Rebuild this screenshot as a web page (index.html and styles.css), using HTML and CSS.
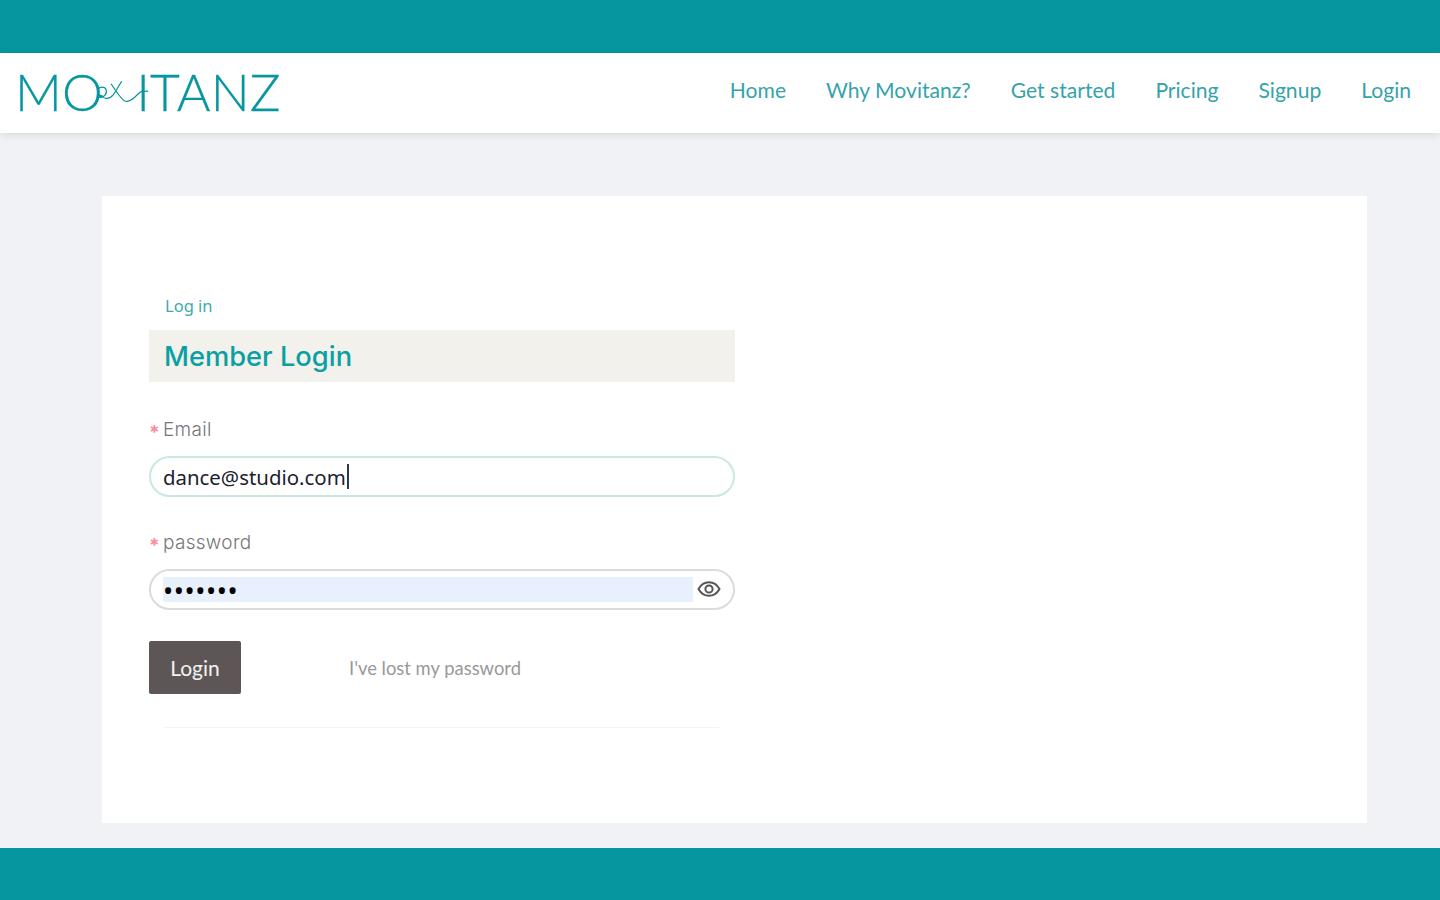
FILE: index.html
```html
<!DOCTYPE html>
<html lang="en">
<head>
<meta charset="utf-8">
<title>Movitanz - Member Login</title>
<link rel="stylesheet" href="styles.css">
</head>
<body>
<div class="topbar"></div>
<header class="header">
  <a class="logo" href="#">
    <span class="logo-text">MO<span class="logo-v">V</span><span class="logo-rest">ITANZ</span></span>
    <svg class="logo-flourish" viewBox="0 0 70 44" width="84" height="53" aria-hidden="true">
      <path d="M18 24c-3 0-5-2-4-5s6-3 7 0-2 7-6 6M14 23c5 3 9 5 13 0 3-4 5-9 7-11M25 14c3 4 7 11 11 14 4 2 8-2 12-6 2-2 3-2 8-2" fill="none" stroke="#06969f" stroke-width="1"/>
    </svg>
  </a>
  <nav class="nav">
    <a href="#">Home</a>
    <a href="#">Why Movitanz?</a>
    <a href="#">Get started</a>
    <a href="#">Pricing</a>
    <a href="#">Signup</a>
    <a href="#">Login</a>
  </nav>
</header>
<main class="main">
  <section class="card">
    <div class="form-col">
      <div class="crumb">Log in</div>
      <h1 class="title">Member Login</h1>
      <div class="field">
        <label class="label"><span class="req">*</span>Email</label>
        <div class="input focus"><span class="value">dance@studio.com</span><span class="caret"></span></div>
      </div>
      <div class="field">
        <label class="label"><span class="req">*</span>password</label>
        <div class="input pass">
          <span class="autofill">•••••••</span>
          <svg class="eye" viewBox="0 0 24 24" width="24" height="24" aria-hidden="true">
            <path d="M1.500 11C4 6.500 7.600 4.200 12 4.200s8 2.300 10.500 6.800c-2.500 4.500-6.100 6.800-10.500 6.800S4 15.500 1.500 11z" fill="none" stroke="#555" stroke-width="2"/>
            <circle cx="12" cy="11" r="3.600" fill="none" stroke="#555" stroke-width="2"/>
          </svg>
        </div>
      </div>
      <div class="actions">
        <button class="btn" type="button">Login</button>
        <a class="lost" href="#">I've lost my password</a>
      </div>
      <div class="rule"></div>
    </div>
  </section>
</main>
<div class="bottombar"></div>
</body>
</html>
```
FILE: styles.css
```css
* { box-sizing: border-box; }
html, body { margin: 0; height: 100%; }
body {
  width: 1440px;
  height: 900px;
  overflow: hidden;
  display: flex;
  flex-direction: column;
  background: #f0f2f5;
  font-family: "Lato", "Liberation Sans", sans-serif;
}
a { text-decoration: none; }

.topbar { height: 53px; background: #06969f; flex: none; }
.bottombar { height: 52px; background: #06969f; flex: none; }

.header {
  height: 80px;
  flex: none;
  background: #fff;
  display: flex;
  align-items: center;
  justify-content: space-between;
  padding: 0 29px 0 15px;
  box-shadow: 0 2px 8px rgba(0, 0, 0, 0.1);
  position: relative;
}
.logo { position: relative; display: block; color: #06969f; margin-top: -4px; }
.logo-text {
  display: block;
  font-family: "Lato", "Liberation Sans", sans-serif;
  font-weight: 300;
  font-size: 51.500px;
  line-height: 60px;
  letter-spacing: 0.3px;
  white-space: nowrap;
  -webkit-text-stroke: 0.3px #06969f;
}
.logo-v { opacity: 0; }
.logo-rest { margin-left: 0; }
.logo-flourish { position: absolute; left: 66px; top: 6px; }

.nav { display: flex; gap: 40px; margin-top: -7px; }
.nav a { color: #35a3a9; font-size: 21.100px; line-height: 26px; white-space: nowrap; }

.main { flex: 1; padding: 63px 73px 25px 102px; }
.card { height: 627px; background: #fff; padding: 99px 47px 0; }
.form-col { width: 586px; }

.crumb {
  padding-left: 16px;
  color: #3eaaad;
  font-family: "Noto Sans", sans-serif;
  font-size: 16.500px;
  line-height: 22px;
  margin-bottom: 13px;
}
.title {
  margin: 0;
  height: 52px;
  background: #f3f1ec;
  padding-left: 15px;
  color: #0aa0a3;
  font-family: "Inter", sans-serif;
  font-size: 27.300px;
  font-weight: 500;
  line-height: 54px;
}

.field { margin-top: 35px; }
.field + .field { margin-top: 33px; }
.label {
  display: flex;
  align-items: center;
  height: 24px;
  padding-top: 1px;
  color: #777;
  font-family: "Inter", sans-serif;
  font-weight: 300;
  font-size: 19px;
  letter-spacing: 0.3px;
  margin-bottom: 15px;
}
.req {
  width: 14px;
  color: #f58f9b;
  font-size: 19px;
  font-weight: 700;
  line-height: 15px;
  padding-top: 5px;
}

.input {
  height: 41px;
  border: 2px solid #d9dcdc;
  border-radius: 21px;
  background: #fff;
  display: flex;
  align-items: center;
  padding-left: 12px;
  color: #1c2230;
  font-family: "Noto Sans", sans-serif;
  font-size: 20.400px;
}
.input.focus { border-color: #c9e8e2; }
.value { white-space: nowrap; }
.caret { width: 2px; height: 25px; background: #2b3a4a; margin-left: 1px; }

.autofill {
  flex: 1;
  height: 25px;
  background: #e8f0fe;
  color: #000;
  font-size: 27px;
  line-height: 27px;
  letter-spacing: 0.6px;
}
.eye { margin: 0 12px 0 4px; flex: none; }

.actions { display: flex; align-items: center; margin-top: 31px; }
.btn {
  width: 92px;
  height: 53px;
  border: 0;
  border-radius: 2px;
  background: #5e5656;
  color: #f2f2f2;
  font-family: "Lato", sans-serif;
  font-size: 21px;
  padding: 0;
}
.lost {
  margin-left: 108px;
  color: #999;
  font-size: 18.400px;
}
.rule {
  margin: 33px 16px 0;
  height: 1px;
  background: #f2f3f3;
}
```
